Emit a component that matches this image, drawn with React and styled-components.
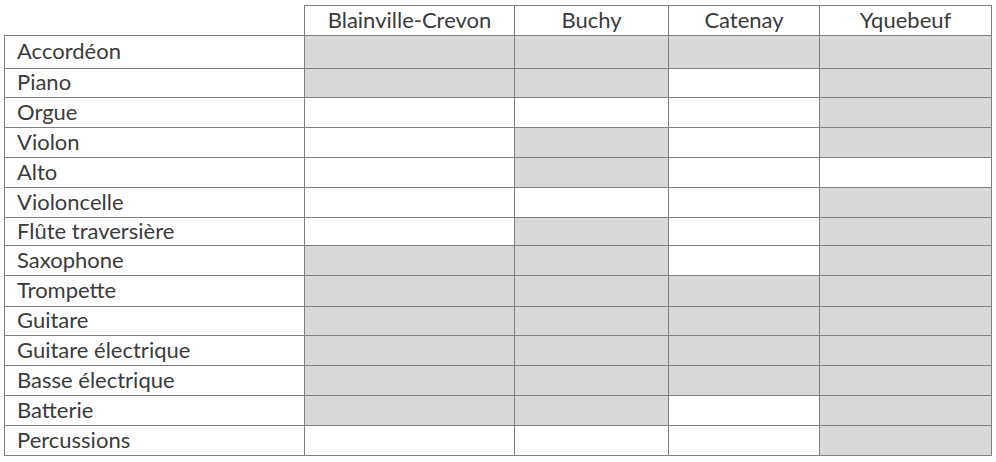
import React from "react"
import styled, { createGlobalStyle } from "styled-components"

const GlobalStyle = createGlobalStyle`
  html, body {
    margin: 0;
    padding: 0;
    background: #ffffff;
  }
  body {
    font-family: Lato, "Open Sans", "Liberation Sans", sans-serif;
  }
`

const towns = ["Blainville-Crevon", "Buchy", "Catenay", "Yquebeuf"]

// 1 = cours proposé (case grisée)
const instruments = [
  { name: "Accordéon", cells: [1, 1, 1, 1] },
  { name: "Piano", cells: [1, 1, 0, 1] },
  { name: "Orgue", cells: [0, 0, 0, 1] },
  { name: "Violon", cells: [0, 1, 0, 1] },
  { name: "Alto", cells: [0, 1, 0, 0] },
  { name: "Violoncelle", cells: [0, 0, 0, 1] },
  { name: "Flûte traversière", cells: [0, 1, 0, 1] },
  { name: "Saxophone", cells: [1, 1, 0, 1] },
  { name: "Trompette", cells: [1, 1, 1, 1] },
  { name: "Guitare", cells: [1, 1, 1, 1] },
  { name: "Guitare électrique", cells: [1, 1, 1, 1] },
  { name: "Basse électrique", cells: [1, 1, 1, 1] },
  { name: "Batterie", cells: [1, 1, 0, 1] },
  { name: "Percussions", cells: [0, 0, 0, 1] },
]

const Page = styled.div`
  padding: 5px 0 0 4px;
`

const Grid = styled.div`
  display: grid;
  grid-template-columns: 301px 210px 154px 151px 172px;
  grid-template-rows: 31px 33px 29px 30px 30px 30px 30px 28px 30px 31px 29px 30px 30px 30px 30px;
  width: max-content;
  color: #3b3b3b;
  font-size: 22px;
  line-height: 1;
`

const Cell = styled.div`
  box-sizing: border-box;
  display: flex;
  align-items: center;
  border-right: 1px solid #7f7f7f;
  border-bottom: 1px solid #7f7f7f;
  background: ${(p) => (p.$filled ? "#d9d9d9" : "#ffffff")};
  padding-bottom: 2px;
`

const Corner = styled(Cell)`
  background: transparent;
`

const HeadCell = styled(Cell)`
  justify-content: center;
  border-top: 1px solid #7f7f7f;
`

const LabelCell = styled(Cell)`
  border-left: 1px solid #7f7f7f;
  padding-left: 12px;
`

export default function App() {
  return (
    <Page>
      <GlobalStyle />
      <Grid>
        <Corner />
        {towns.map((t) => (
          <HeadCell key={t}>{t}</HeadCell>
        ))}
        {instruments.map((row) => (
          <React.Fragment key={row.name}>
            <LabelCell>{row.name}</LabelCell>
            {row.cells.map((c, i) => (
              <Cell key={i} $filled={c === 1} />
            ))}
          </React.Fragment>
        ))}
      </Grid>
    </Page>
  )
}
